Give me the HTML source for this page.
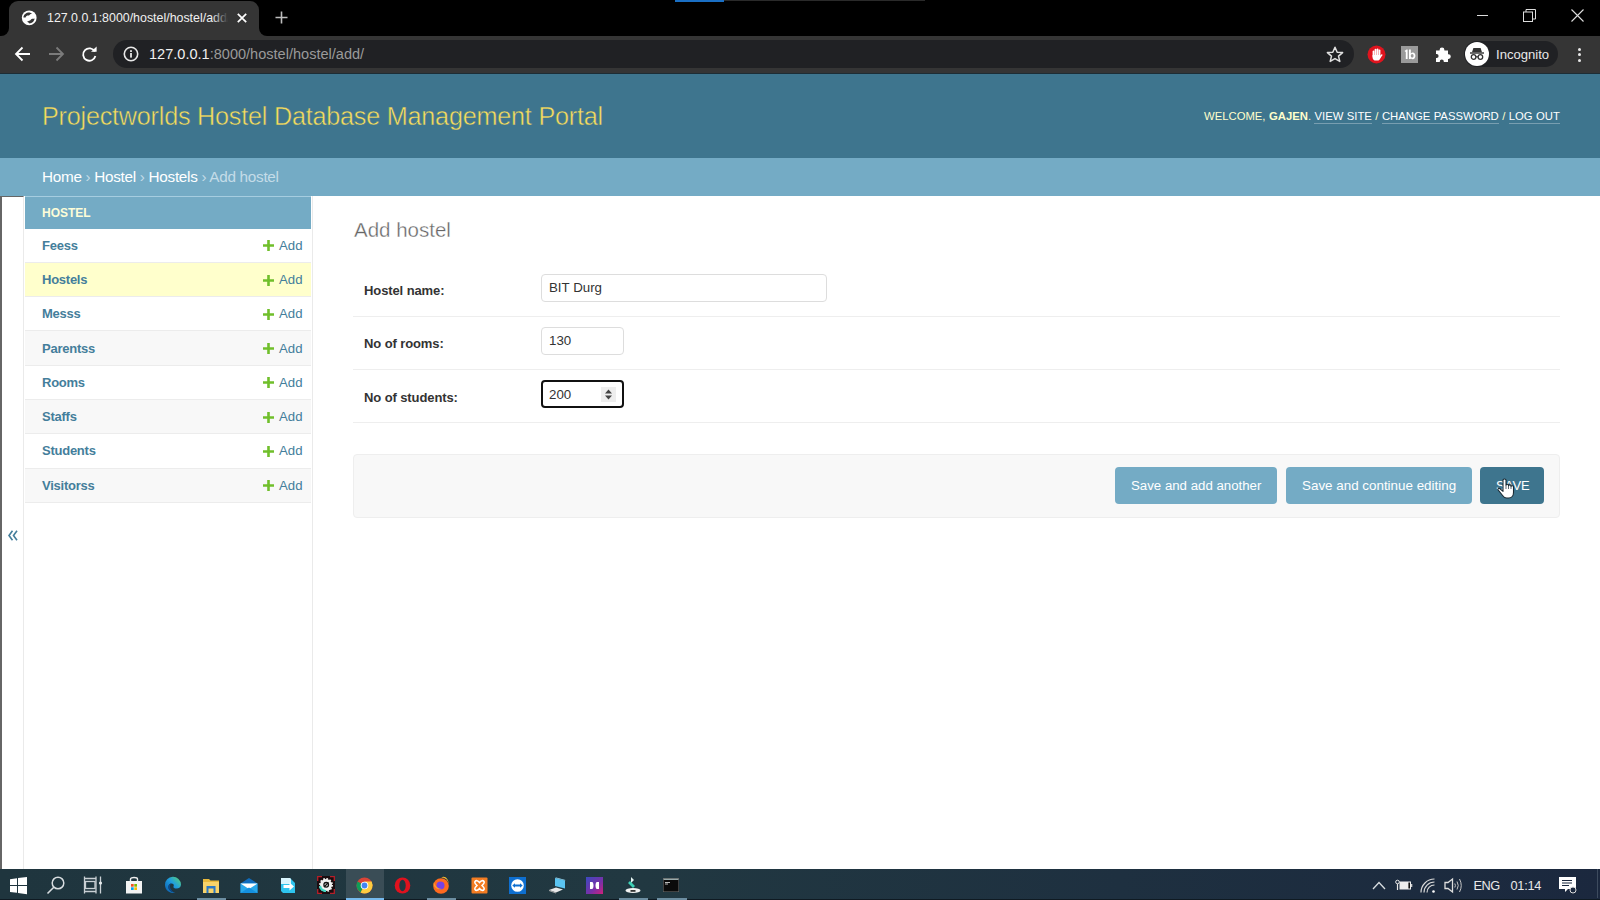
<!DOCTYPE html>
<html><head><meta charset="utf-8">
<style>
*{box-sizing:border-box;margin:0;padding:0}
html,body{width:1600px;height:900px;overflow:hidden;background:#fff;font-family:"Liberation Sans",sans-serif}
.a{position:absolute}
.t{position:absolute;white-space:nowrap;line-height:1}
</style></head><body>
<!-- ===== Chrome tab strip ===== -->
<div class="a" style="left:0;top:0;width:1600px;height:36px;background:#000"></div>
<div class="a" style="left:675px;top:0;width:49px;height:2px;background:#1a6fc4"></div>
<div class="a" style="left:724px;top:0;width:201px;height:1px;background:#2a2a2a"></div>
<!-- active tab -->
<div class="a" style="left:9px;top:1px;width:250px;height:36px;background:#353535;border-radius:9px 9px 0 0"></div>
<div class="a" style="left:1px;top:26px;width:8px;height:10px;background:#353535"></div>
<div class="a" style="left:1px;top:26px;width:8px;height:10px;background:#000;border-radius:0 0 8px 0"></div>
<div class="a" style="left:259px;top:26px;width:8px;height:10px;background:#353535"></div>
<div class="a" style="left:259px;top:26px;width:8px;height:10px;background:#000;border-radius:0 0 0 8px"></div>
<!-- globe -->
<svg class="a" style="left:21px;top:10px" width="16" height="16" viewBox="0 0 16 16"><circle cx="8.2" cy="7.8" r="7.4" fill="#fff"/><path d="M2.4 7.4C2.6 4.6 5.4 2.4 8.6 2.6L11.2 3.4C9.8 3.8 8.6 4.4 8 5.6C6.6 5.2 5 5.8 4.6 7.4Z" fill="#353535"/><path d="M6 11.8C7.4 10.6 9 10.9 9.8 9.7C10.6 8.6 12.4 8.9 13.6 8.6C13.3 11.2 11.2 13.4 8.4 13.4C7.8 12.6 6.8 12.3 6 11.8Z" fill="#353535"/></svg>
<div class="a" style="left:46px;top:6px;width:184px;height:24px;overflow:hidden"><div class="t" style="left:1px;top:6px;font-size:12.4px;letter-spacing:0px;color:#f0f0f0">127.0.0.1:8000/hostel/hostel/add/</div></div>
<div class="a" style="left:212px;top:6px;width:18px;height:24px;background:linear-gradient(90deg,rgba(53,53,53,0),#353535 90%)"></div>
<svg class="a" style="left:237px;top:13px" width="10" height="10" viewBox="0 0 10 10"><path d="M0.8 0.8L9.2 9.2M9.2 0.8L0.8 9.2" stroke="#fff" stroke-width="1.7"/></svg>
<svg class="a" style="left:275px;top:11px" width="13" height="13" viewBox="0 0 13 13"><path d="M6.5 0.5V12.5M0.5 6.5H12.5" stroke="#bdbdbd" stroke-width="1.6"/></svg>
<!-- window controls -->
<div class="a" style="left:1477px;top:15px;width:11px;height:1px;background:#ddd"></div>
<svg class="a" style="left:1523px;top:9px" width="13" height="13" viewBox="0 0 13 13"><rect x="0.5" y="3" width="9" height="9.5" fill="none" stroke="#ddd" stroke-width="1"/><path d="M3 3V0.5H12.5V10H9.5" fill="none" stroke="#ddd" stroke-width="1"/></svg>
<svg class="a" style="left:1571px;top:9px" width="13" height="13" viewBox="0 0 13 13"><path d="M0.5 0.5L12.5 12.5M12.5 0.5L0.5 12.5" stroke="#ddd" stroke-width="1.1"/></svg>

<!-- ===== Toolbar ===== -->
<div class="a" style="left:0;top:36px;width:1600px;height:37px;background:#353535"></div>
<svg class="a" style="left:14px;top:46px" width="17" height="16" viewBox="0 0 17 16"><path d="M16 8H2M8.5 1.5L2 8L8.5 14.5" stroke="#fff" stroke-width="1.8" fill="none"/></svg>
<svg class="a" style="left:48px;top:46px" width="17" height="16" viewBox="0 0 17 16"><path d="M1 8H15M8.5 1.5L15 8L8.5 14.5" stroke="#7b7b7b" stroke-width="1.8" fill="none"/></svg>
<svg class="a" style="left:81px;top:46px" width="17" height="17" viewBox="0 0 17 17"><path d="M13.8 5.5A6.2 6.2 0 1 0 14.4 10" stroke="#fff" stroke-width="1.8" fill="none"/><path d="M10 5.8H15.6V0.4Z" fill="#fff"/></svg>
<div class="a" style="left:113px;top:40px;width:1241px;height:28px;background:#202124;border-radius:14px"></div>
<svg class="a" style="left:123px;top:46px" width="16" height="16" viewBox="0 0 16 16"><circle cx="8" cy="8" r="6.7" fill="none" stroke="#e8e8e8" stroke-width="1.6"/><rect x="7.1" y="7" width="1.8" height="4.6" fill="#e8e8e8"/><rect x="7.1" y="4.2" width="1.8" height="1.8" fill="#e8e8e8"/></svg>
<div class="t" style="left:149px;top:47.1px;font-size:14.55px;color:#f0f0f0">127.0.0.1<span style="color:#9a9a9a">:8000/hostel/hostel/add/</span></div>
<svg class="a" style="left:1326px;top:46px" width="18" height="17" viewBox="0 0 18 17"><path d="M9 1.2L11.2 6.2L16.6 6.6L12.5 10.1L13.8 15.4L9 12.6L4.2 15.4L5.5 10.1L1.4 6.6L6.8 6.2Z" fill="none" stroke="#e0e0e0" stroke-width="1.5" stroke-linejoin="round"/></svg>
<!-- extension icons -->
<svg class="a" style="left:1367px;top:45px" width="19" height="19" viewBox="0 0 19 19"><circle cx="9.5" cy="9.5" r="9" fill="#e0141e"/><rect x="5.6" y="5.5" width="1.9" height="7" rx="0.95" fill="#fff"/><rect x="7.6" y="3.8" width="1.9" height="8" rx="0.95" fill="#fff"/><rect x="9.6" y="3.5" width="1.9" height="8" rx="0.95" fill="#fff"/><rect x="11.6" y="4.6" width="1.8" height="7" rx="0.9" fill="#fff"/><path d="M5.6 10H13.4V12.5C13.4 14.5 12 15.6 10.2 15.6H8.8C7 15.6 5.6 14.4 5.6 12.5Z" fill="#fff"/><path d="M12.8 11.5L14.3 9.6C14.9 9 15.7 9.6 15.3 10.3L13.2 13.5Z" fill="#fff"/></svg>
<div class="a" style="left:1401px;top:46px;width:17px;height:17px;background:#9a9a9a"></div>
<svg class="a" style="left:1401px;top:46px" width="17" height="17" viewBox="0 0 17 17"><path d="M3.5 5L5.6 3.6H6.6V13H4.8V6Z" fill="#fff"/><path d="M8 3.6H9.8V7.4C10.4 6.7 11.1 6.5 11.8 6.5C13.4 6.5 14.4 7.9 14.4 9.8C14.4 11.7 13.4 13.2 11.8 13.2C11 13.2 10.3 12.9 9.8 12.2V13H8Z M11.2 8.1C10.3 8.1 9.8 8.9 9.8 9.8C9.8 10.8 10.3 11.6 11.2 11.6C12.1 11.6 12.6 10.8 12.6 9.8C12.6 8.9 12.1 8.1 11.2 8.1Z" fill="#fff" fill-rule="evenodd"/></svg>
<svg class="a" style="left:1435px;top:46px" width="17" height="17" viewBox="0 0 17 17"><path d="M1 4.6H4.6V4A2.4 2.4 0 1 1 9.4 4V4.6H13V8.2H13.4A2.4 2.4 0 1 1 13.4 13H13V16H8.8V15.4A2 2 0 1 0 4.8 15.4V16H1V12H1.6A2 2 0 1 0 1.6 8H1Z" fill="#fff"/></svg>
<div class="a" style="left:1464px;top:41px;width:94px;height:26px;background:#202124;border-radius:13px"></div>
<div class="a" style="left:1465px;top:42px;width:24px;height:24px;background:#fff;border-radius:50%"></div>
<svg class="a" style="left:1467px;top:44px" width="20" height="20" viewBox="0 0 20 20"><path d="M5 8.2L6.4 4h7.2L15 8.2Z" fill="#333"/><rect x="3" y="8.3" width="14" height="1.4" fill="#333"/><circle cx="6.6" cy="13" r="2.3" fill="none" stroke="#333" stroke-width="1.3"/><circle cx="13.4" cy="13" r="2.3" fill="none" stroke="#333" stroke-width="1.3"/><path d="M8.9 12.8h2.2" stroke="#333" stroke-width="1.2"/></svg>
<div class="t" style="left:1496px;top:48px;font-size:13.1px;color:#e8e8e8">Incognito</div>
<div class="a" style="left:1577.5px;top:47.5px;width:3px;height:3px;background:#e8e8e8;border-radius:50%"></div>
<div class="a" style="left:1577.5px;top:53px;width:3px;height:3px;background:#e8e8e8;border-radius:50%"></div>
<div class="a" style="left:1577.5px;top:58.5px;width:3px;height:3px;background:#e8e8e8;border-radius:50%"></div>

<!-- ===== Django header ===== -->
<div class="a" style="left:0;top:73px;width:1600px;height:85px;background:#3e758e"></div>
<div class="a" style="left:0;top:73px;width:1600px;height:1px;background:#1d2d35"></div>
<div class="t" style="left:42px;top:104px;font-size:25.2px;letter-spacing:-0.22px;color:#f5dd5d;-webkit-text-stroke:0.45px #3e758e">Projectworlds Hostel Database Management Portal</div>
<div class="t" style="left:1204px;top:110.6px;font-size:11.3px;color:#ffc;word-spacing:0.3px">WELCOME, <b>GAJEN</b>. <span style="color:#fff;border-bottom:1px solid rgba(255,255,255,0.3);padding-bottom:1px">VIEW SITE</span> / <span style="color:#fff;border-bottom:1px solid rgba(255,255,255,0.3);padding-bottom:1px">CHANGE PASSWORD</span> / <span style="color:#fff;border-bottom:1px solid rgba(255,255,255,0.3);padding-bottom:1px">LOG OUT</span></div>

<!-- ===== Breadcrumbs ===== -->
<div class="a" style="left:0;top:158px;width:1600px;height:38px;background:#74abc5"></div>
<div class="t" style="left:42px;top:169.2px;font-size:15.3px;letter-spacing:-0.3px;color:#c4dce8"><span style="color:#fff">Home</span> › <span style="color:#fff">Hostel</span> › <span style="color:#fff">Hostels</span> › Add hostel</div>

<!-- ===== Sidebar ===== -->
<div class="a" style="left:0;top:196px;width:24px;height:673px;background:#fff;border-left:2px solid #666;border-top:1px solid #666;border-right:1px solid #eaeaea"></div>
<svg class="a" style="left:8px;top:530px" width="10" height="11" viewBox="0 0 10 11"><path d="M4.5 0.8L1 5.5L4.5 10.2M9 0.8L5.5 5.5L9 10.2" stroke="#447e9b" stroke-width="1.6" fill="none"/></svg>
<div class="a" style="left:312px;top:196px;width:1px;height:673px;background:#eaeaea"></div>
<div class="a" style="left:25px;top:196px;width:286px;height:32.5px;background:#74abc5;border-top:1px solid #a6cde0"></div>
<div class="t" style="left:42px;top:206.9px;font-size:12px;font-weight:700;color:#fdfdd8">HOSTEL</div>
<div class="a" style="left:25px;top:228.50px;width:286px;height:34.3px;background:#fff"></div>
<div class="a" style="left:25px;top:262px;width:286px;height:1px;background:#ececec"></div>
<div class="t" style="left:42px;top:238.7px;font-size:13px;font-weight:700;color:#447e9b;letter-spacing:-0.25px">Feess</div>
<svg class="a" style="left:263px;top:240.2px" width="11" height="11" viewBox="0 0 11 11"><path d="M5.5 0V11M0 5.5H11" stroke="#70bf2b" stroke-width="2.6"/></svg>
<div class="t" style="left:279px;top:238.6px;font-size:13.2px;color:#447e9b">Add</div>
<div class="a" style="left:25px;top:262.79px;width:286px;height:34.3px;background:#ffffcc"></div>
<div class="a" style="left:25px;top:296px;width:286px;height:1px;background:#ececec"></div>
<div class="t" style="left:42px;top:273.0px;font-size:13px;font-weight:700;color:#447e9b;letter-spacing:-0.25px">Hostels</div>
<svg class="a" style="left:263px;top:274.5px" width="11" height="11" viewBox="0 0 11 11"><path d="M5.5 0V11M0 5.5H11" stroke="#70bf2b" stroke-width="2.6"/></svg>
<div class="t" style="left:279px;top:272.9px;font-size:13.2px;color:#447e9b">Add</div>
<div class="a" style="left:25px;top:297.08px;width:286px;height:34.3px;background:#fff"></div>
<div class="a" style="left:25px;top:330px;width:286px;height:1px;background:#ececec"></div>
<div class="t" style="left:42px;top:307.3px;font-size:13px;font-weight:700;color:#447e9b;letter-spacing:-0.25px">Messs</div>
<svg class="a" style="left:263px;top:308.8px" width="11" height="11" viewBox="0 0 11 11"><path d="M5.5 0V11M0 5.5H11" stroke="#70bf2b" stroke-width="2.6"/></svg>
<div class="t" style="left:279px;top:307.2px;font-size:13.2px;color:#447e9b">Add</div>
<div class="a" style="left:25px;top:331.37px;width:286px;height:34.3px;background:#f8f8f8"></div>
<div class="a" style="left:25px;top:365px;width:286px;height:1px;background:#ececec"></div>
<div class="t" style="left:42px;top:341.6px;font-size:13px;font-weight:700;color:#447e9b;letter-spacing:-0.25px">Parentss</div>
<svg class="a" style="left:263px;top:343.1px" width="11" height="11" viewBox="0 0 11 11"><path d="M5.5 0V11M0 5.5H11" stroke="#70bf2b" stroke-width="2.6"/></svg>
<div class="t" style="left:279px;top:341.5px;font-size:13.2px;color:#447e9b">Add</div>
<div class="a" style="left:25px;top:365.66px;width:286px;height:34.3px;background:#fff"></div>
<div class="a" style="left:25px;top:399px;width:286px;height:1px;background:#ececec"></div>
<div class="t" style="left:42px;top:375.9px;font-size:13px;font-weight:700;color:#447e9b;letter-spacing:-0.25px">Rooms</div>
<svg class="a" style="left:263px;top:377.4px" width="11" height="11" viewBox="0 0 11 11"><path d="M5.5 0V11M0 5.5H11" stroke="#70bf2b" stroke-width="2.6"/></svg>
<div class="t" style="left:279px;top:375.8px;font-size:13.2px;color:#447e9b">Add</div>
<div class="a" style="left:25px;top:399.95px;width:286px;height:34.3px;background:#f8f8f8"></div>
<div class="a" style="left:25px;top:433px;width:286px;height:1px;background:#ececec"></div>
<div class="t" style="left:42px;top:410.1px;font-size:13px;font-weight:700;color:#447e9b;letter-spacing:-0.25px">Staffs</div>
<svg class="a" style="left:263px;top:411.6px" width="11" height="11" viewBox="0 0 11 11"><path d="M5.5 0V11M0 5.5H11" stroke="#70bf2b" stroke-width="2.6"/></svg>
<div class="t" style="left:279px;top:410.0px;font-size:13.2px;color:#447e9b">Add</div>
<div class="a" style="left:25px;top:434.24px;width:286px;height:34.3px;background:#fff"></div>
<div class="a" style="left:25px;top:468px;width:286px;height:1px;background:#ececec"></div>
<div class="t" style="left:42px;top:444.4px;font-size:13px;font-weight:700;color:#447e9b;letter-spacing:-0.25px">Students</div>
<svg class="a" style="left:263px;top:445.9px" width="11" height="11" viewBox="0 0 11 11"><path d="M5.5 0V11M0 5.5H11" stroke="#70bf2b" stroke-width="2.6"/></svg>
<div class="t" style="left:279px;top:444.3px;font-size:13.2px;color:#447e9b">Add</div>
<div class="a" style="left:25px;top:468.53px;width:286px;height:34.3px;background:#f8f8f8"></div>
<div class="a" style="left:25px;top:502px;width:286px;height:1px;background:#ececec"></div>
<div class="t" style="left:42px;top:478.7px;font-size:13px;font-weight:700;color:#447e9b;letter-spacing:-0.25px">Visitorss</div>
<svg class="a" style="left:263px;top:480.2px" width="11" height="11" viewBox="0 0 11 11"><path d="M5.5 0V11M0 5.5H11" stroke="#70bf2b" stroke-width="2.6"/></svg>
<div class="t" style="left:279px;top:478.6px;font-size:13.2px;color:#447e9b">Add</div>

<!-- ===== Content ===== -->
<div class="t" style="left:354px;top:219.6px;font-size:20.5px;color:#666;-webkit-text-stroke:0.35px #fff">Add hostel</div>

<div class="t" style="left:364px;top:284.1px;font-size:13px;font-weight:700;color:#333;letter-spacing:-0.1px">Hostel name:</div>
<div class="a" style="left:541px;top:274px;width:286px;height:28px;border:1px solid #ddd;border-radius:4px;background:#fff"></div>
<div class="t" style="left:549px;top:281px;font-size:13.3px;color:#333">BIT Durg</div>
<div class="a" style="left:353px;top:316px;width:1207px;height:1px;background:#eee"></div>

<div class="t" style="left:364px;top:336.8px;font-size:13px;font-weight:700;color:#333;letter-spacing:-0.1px">No of rooms:</div>
<div class="a" style="left:541px;top:327px;width:83px;height:28px;border:1px solid #ddd;border-radius:4px;background:#fff"></div>
<div class="t" style="left:549px;top:334.3px;font-size:13.3px;color:#333">130</div>
<div class="a" style="left:353px;top:369px;width:1207px;height:1px;background:#eee"></div>

<div class="t" style="left:364px;top:390.5px;font-size:13px;font-weight:700;color:#333;letter-spacing:-0.1px">No of students:</div>
<div class="a" style="left:541px;top:380px;width:83px;height:28px;border:2px solid #111;border-radius:4px;background:#fff"></div>
<div class="t" style="left:549px;top:387.6px;font-size:13.3px;color:#333">200</div>
<div class="a" style="left:601px;top:387px;width:15px;height:15px;background:#eee"></div>
<svg class="a" style="left:603px;top:388px" width="11" height="13" viewBox="0 0 11 13"><path d="M5.5 1.5L9 5.5H2Z M5.5 11.5L9 7.5H2Z" fill="#444"/></svg>
<div class="a" style="left:353px;top:422px;width:1207px;height:1px;background:#eee"></div>

<div class="a" style="left:353px;top:454px;width:1207px;height:64px;background:#f8f8f8;border:1px solid #eee;border-radius:4px"></div>
<div class="a" style="left:1115px;top:467px;width:162px;height:37px;background:#74abc5;border-radius:4px"></div>
<div class="t" style="left:1131px;top:479px;font-size:13.25px;color:#fff">Save and add another</div>
<div class="a" style="left:1286px;top:467px;width:186px;height:37px;background:#74abc5;border-radius:4px"></div>
<div class="t" style="left:1302px;top:479px;font-size:13.4px;color:#fff">Save and continue editing</div>
<div class="a" style="left:1480px;top:467px;width:64px;height:37px;background:#3e758e;border-radius:4px"></div>
<div class="t" style="left:1496px;top:479px;font-size:13px;color:#fff">SAVE</div>
<!-- cursor -->
<svg class="a" style="left:1496.5px;top:477.5px" width="18" height="21" viewBox="0 0 18 21"><path d="M6 2C6 0.6 9 0.6 9 2V7.2C9 6 11.5 6 11.5 7.2V7.8C11.5 6.6 14 6.6 14 7.8V8.6C14 7.4 16.5 7.4 16.5 8.6V14.5C16.5 17.6 14.6 20 11.6 20H9.6C7.7 20 6.6 19 5.6 17.5L1.2 12C0.5 11 1.7 9.8 2.7 10.5L6 13.3Z" fill="#fff" stroke="#1a2a33" stroke-width="1.1" stroke-linejoin="round"/><path d="M9 7.5V11M11.5 8V11M14 8.7V11" stroke="#1a2a33" stroke-width="0.7"/></svg>

<!-- ===== Taskbar ===== -->
<div class="a" style="left:0;top:869px;width:1600px;height:31px;background:linear-gradient(90deg,#1f353e 0%,#213841 40%,#1e3040 70%,#1b283e 100%)"></div>
<div class="a" style="left:0;top:899px;width:1600px;height:1px;background:#0f1a22"></div>
<!-- start -->
<svg class="a" style="left:9px;top:876px" width="19" height="19" viewBox="0 0 19 19"><path d="M1 3.2L8 2.3V9H1Z M9 2.1L18 0.9V9H9Z M1 10H8V16.8L1 15.9Z M9 10H18V18.2L9 17Z" fill="#fff"/></svg>
<!-- search -->
<svg class="a" style="left:46px;top:875px" width="20" height="20" viewBox="0 0 20 20"><circle cx="12" cy="8" r="5.8" fill="none" stroke="#d8dde0" stroke-width="1.5"/><path d="M7.8 12.2L1.5 18.5" stroke="#d8dde0" stroke-width="1.6"/></svg>
<!-- task view -->
<svg class="a" style="left:83px;top:876px" width="20" height="18" viewBox="0 0 20 18"><path d="M1.5 0.5V17.5M13 0.5V17.5M1.5 2.5H13M1.5 15.5H13" stroke="#c9d0d4" stroke-width="1.3" fill="none"/><rect x="2.5" y="5.5" width="9.5" height="7" fill="none" stroke="#c9d0d4" stroke-width="1.3"/><path d="M17.5 0.5V17.5" stroke="#c9d0d4" stroke-width="1.3"/><circle cx="17.5" cy="7" r="1.6" fill="#e6eaec"/></svg>
<!-- store -->
<svg class="a" style="left:125px;top:876px" width="18" height="18" viewBox="0 0 18 18"><path d="M5.5 5V3C5.5 1 12.5 1 12.5 3V5" stroke="#eee" stroke-width="1.4" fill="none"/><rect x="1" y="5" width="16" height="12.5" fill="#f3f3f3"/><rect x="6" y="8" width="2.7" height="2.7" fill="#f25022"/><rect x="9.3" y="8" width="2.7" height="2.7" fill="#7fba00"/><rect x="6" y="11.3" width="2.7" height="2.7" fill="#00a4ef"/><rect x="9.3" y="11.3" width="2.7" height="2.7" fill="#ffb900"/></svg>
<!-- edge -->
<svg class="a" style="left:164px;top:876px" width="18" height="18" viewBox="0 0 18 18"><defs><linearGradient id="eg" x1="0" y1="1" x2="1" y2="0"><stop offset="0" stop-color="#0b57a8"/><stop offset="0.55" stop-color="#1f9ee0"/><stop offset="1" stop-color="#5fd66a"/></linearGradient></defs><path d="M1 9A8 8 0 0 1 17 8.5C17 11 15 12.5 12.5 12.5C10 12.5 9 11.5 9.5 10.5C10 9.5 10 7.5 7.5 7.5C5 7.5 4 10 4.5 12C5 14.5 8 16.5 11 16.8A8 8 0 0 1 1 9Z" fill="url(#eg)"/><path d="M4.5 12C4 10 5 7.5 7.5 7.5C6 8 5.5 10.5 6.5 12.5C7.5 14.5 9.5 16.2 11 16.8C8 16.5 5 14.5 4.5 12Z" fill="#0a4a8e"/></svg>
<!-- explorer -->
<svg class="a" style="left:202px;top:877px" width="18" height="17" viewBox="0 0 18 17"><path d="M1 2H7L8.5 3.5H17V16H1Z" fill="#e9b93c"/><rect x="1" y="5" width="16" height="11" fill="#f8d36a"/><rect x="4.5" y="9" width="9" height="7" fill="#2b78c4"/><rect x="6.5" y="11.5" width="5" height="4.5" fill="#f8d36a"/></svg>
<!-- mail -->
<svg class="a" style="left:240px;top:877px" width="18" height="17" viewBox="0 0 18 17"><path d="M9 1L17.5 6.5V16H0.5V6.5Z" fill="#0f6cbd"/><rect x="0.5" y="6.5" width="17" height="9.5" fill="#28a8ea"/><path d="M0.5 6.5L9 12L17.5 6.5" fill="#fff"/><path d="M0.5 16L9 10.5L17.5 16" fill="#1490df"/></svg>
<!-- arrow app -->
<svg class="a" style="left:280px;top:877px" width="16" height="17" viewBox="0 0 16 17"><path d="M1 1H10L15 6V16H3L1 14Z" fill="#2ec4ee"/><path d="M1 1H10L11 2V7H1Z" fill="#d9f5fd"/><path d="M3.5 8H9.5V5.5L14 9.5L9.5 13.5V11H3.5Z" fill="#fff"/></svg>
<!-- settings app -->
<svg class="a" style="left:317px;top:876px" width="18" height="18" viewBox="0 0 18 18"><rect x="0" y="0" width="18" height="18" fill="#1a0d10"/><path d="M0.7 5V0.7H5M13 0.7H17.3V5M17.3 13V17.3H13M5 17.3H0.7V13" stroke="#b5202a" stroke-width="1.3" fill="none"/><circle cx="9" cy="9" r="6" fill="#f0f0f0" stroke="#f0f0f0" stroke-width="2" stroke-dasharray="1.6 1.5"/><path d="M3 10A6 6 0 0 0 9 15" stroke="#3fd6c4" stroke-width="2.2" fill="none"/><circle cx="9.2" cy="8.8" r="2.3" fill="none" stroke="#111" stroke-width="1.3"/><path d="M7 11L11.5 6.5" stroke="#111" stroke-width="1.2"/></svg>
<!-- chrome active bg -->
<div class="a" style="left:346px;top:869px;width:38px;height:31px;background:#3a4d56"></div>
<div class="a" style="left:346px;top:898px;width:38px;height:2px;background:#76b9ed"></div>
<svg class="a" style="left:356px;top:877px" width="17" height="17" viewBox="0 0 17 17"><circle cx="8.5" cy="8.5" r="8" fill="#db4437"/><path d="M8.5 8.5L1.6 4.5A8 8 0 0 0 4.5 15.4Z" fill="#0f9d58"/><path d="M8.5 8.5L4.5 15.4A8 8 0 0 0 16.5 8.5L15.4 4.5Z" fill="#ffcd40"/><path d="M8.5 8.5H16.5A8 8 0 0 0 15.4 4.5H8.5Z" fill="#ffcd40"/><circle cx="8.5" cy="8.5" r="3.8" fill="#fff"/><circle cx="8.5" cy="8.5" r="2.9" fill="#4285f4"/></svg>
<!-- opera -->
<svg class="a" style="left:394px;top:877px" width="17" height="17" viewBox="0 0 17 17"><ellipse cx="8.5" cy="8.5" rx="7.8" ry="8" fill="#e0121e"/><ellipse cx="8.5" cy="8.5" rx="3.2" ry="5.8" fill="#213841"/></svg>
<div class="a" style="left:427px;top:898px;width:29px;height:2px;background:#6c8da0"></div>
<!-- firefox -->
<svg class="a" style="left:432px;top:876px" width="18" height="18" viewBox="0 0 18 18"><circle cx="9" cy="10" r="7.8" fill="#ff6a1f"/><path d="M9 2C12 1 16 3 16.5 8C17 4 14 0.5 11 0.8Z" fill="#ffbd2e"/><circle cx="8.5" cy="9.5" r="4" fill="#7542e5"/><path d="M2 6C3 10 6 13 10 13C6 14 2 12 1.5 8Z" fill="#ff9b2e"/></svg>
<!-- xampp -->
<svg class="a" style="left:471px;top:877px" width="17" height="17" viewBox="0 0 17 17"><rect x="0.5" y="0.5" width="16" height="16" rx="1" fill="#f37c22"/><path d="M4 4.5C5 3 7 3.5 8.5 5.5C10 3.5 12 3 13 4.5C14 6 12 7.5 11 8.5C12 9.5 14 11 13 12.5C12 14 10 13.5 8.5 11.5C7 13.5 5 14 4 12.5C3 11 5 9.5 6 8.5C5 7.5 3 6 4 4.5Z" fill="none" stroke="#fff" stroke-width="1.5"/></svg>
<!-- teamviewer -->
<svg class="a" style="left:509px;top:877px" width="17" height="17" viewBox="0 0 17 17"><rect x="0" y="0" width="17" height="17" fill="#0e6fd0"/><circle cx="8.5" cy="8.5" r="6.3" fill="#fff"/><path d="M3.3 8.5L6 6.2V7.6H11V6.2L13.7 8.5L11 10.8V9.4H6V10.8Z" fill="#0e6fd0"/></svg>
<!-- network pc -->
<svg class="a" style="left:548px;top:877px" width="18" height="17" viewBox="0 0 18 17"><path d="M7 1L17 3.5V11.5L7 9Z" fill="#5bc4f1"/><path d="M7 1L8.2 0.6L17.5 3L17 3.5Z" fill="#9bdcf7"/><path d="M1 13L8 10.5L15 12.5L8 15.5Z" fill="#e8e8e8"/><path d="M1 13L8 15.5V16.5L1 14Z" fill="#aaa"/></svg>
<!-- dolby -->
<svg class="a" style="left:586px;top:877px" width="17" height="17" viewBox="0 0 17 17"><defs><linearGradient id="dg" x1="0" y1="0" x2="1" y2="1"><stop offset="0" stop-color="#3b4ac0"/><stop offset="0.6" stop-color="#7b2fa8"/><stop offset="1" stop-color="#d0217a"/></linearGradient></defs><rect x="0" y="0" width="17" height="17" fill="url(#dg)"/><path d="M4 5H6C8 5 8 12 6 12H4Z M13 5H11C9 5 9 12 11 12H13Z" fill="#fff"/></svg>
<div class="a" style="left:619px;top:898px;width:29px;height:2px;background:#6c8da0"></div>
<!-- anaconda nav -->
<svg class="a" style="left:625px;top:876px" width="16" height="18" viewBox="0 0 16 18"><path d="M6 1L9 4L6 7Z" fill="#e6f5f3"/><path d="M5 5L10 10L8 12L3 7Z" fill="#3ed0b6"/><ellipse cx="8" cy="14.5" rx="7.5" ry="2.5" fill="#f2f2f2"/><rect x="5.5" y="14" width="5" height="1.8" fill="#333"/></svg>
<div class="a" style="left:657px;top:898px;width:30px;height:2px;background:#6c8da0"></div>
<!-- cmd -->
<svg class="a" style="left:663px;top:878px" width="16" height="14" viewBox="0 0 16 14"><rect x="0" y="0" width="16" height="14" fill="#0b0b0b" stroke="#777" stroke-width="1"/><rect x="0.5" y="0.5" width="15" height="1.5" fill="#9aa"/><path d="M2 4.5H7M2 6H5" stroke="#ccc" stroke-width="0.9"/></svg>
<div class="a" style="left:197px;top:898px;width:29px;height:2px;background:#6c8da0"></div>
<!-- tray -->
<svg class="a" style="left:1372px;top:881px" width="14" height="9" viewBox="0 0 14 9"><path d="M1 8L7 1.5L13 8" stroke="#d8dde0" stroke-width="1.3" fill="none"/></svg>
<svg class="a" style="left:1395px;top:879px" width="18" height="12" viewBox="0 0 18 12"><circle cx="2.5" cy="3" r="1.8" fill="none" stroke="#e6e6e6" stroke-width="1"/><path d="M2.5 4.8V11" stroke="#e6e6e6" stroke-width="1.2"/><rect x="4.5" y="2.5" width="11.5" height="8" fill="#eee"/><rect x="13.4" y="3.5" width="1.6" height="6" fill="#111"/><rect x="16" y="5" width="1.3" height="3" fill="#ccc"/></svg>
<svg class="a" style="left:1420px;top:878px" width="17" height="15" viewBox="0 0 17 15"><path d="M1 14.5A13.5 13.5 0 0 1 14.5 1M4 14.5A10.5 10.5 0 0 1 14.5 4M7 14.5A7.5 7.5 0 0 1 14.5 7" stroke="#d8d8d8" stroke-width="1.2" fill="none"/><circle cx="13.5" cy="13.5" r="1.3" fill="#fff"/></svg>
<svg class="a" style="left:1444px;top:877px" width="20" height="17" viewBox="0 0 20 17"><path d="M1 5.5H4L8.5 2V15L4 11.5H1Z" fill="none" stroke="#ddd" stroke-width="1.3"/><path d="M10.8 6.5Q12 8.5 10.8 10.5M13 4.5Q15.5 8.5 13 12.5M15.5 2Q19 8.5 15.5 15" stroke="#c5c5c5" stroke-width="1" fill="none"/></svg>
<div class="t" style="left:1473.5px;top:880px;font-size:12.8px;letter-spacing:-0.5px;color:#e8e8e8">ENG</div>
<div class="t" style="left:1510.5px;top:880px;font-size:12.8px;letter-spacing:-0.3px;color:#e8e8e8">01:14</div>
<svg class="a" style="left:1558px;top:876px" width="19" height="18" viewBox="0 0 19 18"><path d="M1 1H18V13H10L7 16V13H1Z" fill="#fff"/><path d="M4 4.5H14M4 7H14M4 9.5H11" stroke="#1b283e" stroke-width="1.1"/><circle cx="15" cy="14" r="3" fill="#1b283e" stroke="#ddd" stroke-width="1"/></svg>
<div class="a" style="left:1597px;top:869px;width:1px;height:29px;background:#3d4b5e"></div>

</body></html>
